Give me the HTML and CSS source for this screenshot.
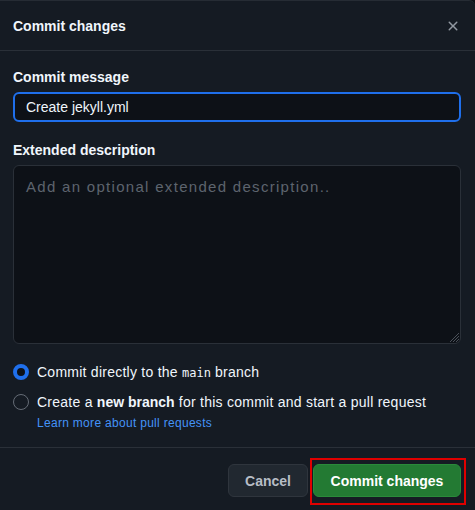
FILE: index.html
```html
<!DOCTYPE html>
<html>
<head>
<meta charset="utf-8">
<link rel="stylesheet" href="styles.css">
</head>
<body>
<div class="dialog">
  <div class="header">
    <h1 class="title">Commit changes</h1>
    <button class="close" aria-label="Close">
      <svg width="16" height="16" viewBox="0 0 16 16"><path fill="currentColor" d="M3.72 3.72a.75.75 0 0 1 1.06 0L8 6.94l3.22-3.220a.749.749 0 0 1 1.275.326.749.749 0 0 1-.215.734L9.06 8l3.22 3.22a.749.749 0 0 1-.326 1.275.749.749 0 0 1-.734-.215L8 9.06l-3.22 3.22a.751.751 0 0 1-1.042-.018.751.751 0 0 1-.018-1.042L6.94 8 3.72 4.78a.75.75 0 0 1 0-1.06Z"/></svg>
    </button>
  </div>
  <div class="body">
    <label class="label">Commit message</label>
    <input class="input" type="text" value="Create jekyll.yml">
    <label class="label label-ext">Extended description</label>
    <div class="textarea-wrap">
      <textarea class="textarea" placeholder="Add an optional extended description.."></textarea>
      <svg class="grip" width="10" height="10" viewBox="0 0 10 10"><path d="M10 1 1 10M10 4 4 10M10 7 7 10" stroke="#4a5059" stroke-width="1"/></svg>
    </div>
    <div class="options">
      <div class="option">
        <span class="radio checked"></span>
        <span class="option-text">Commit directly to the <code class="mono">main</code> branch</span>
      </div>
      <div class="option">
        <span class="radio"></span>
        <div class="option-col">
          <span class="option-text">Create a <strong>new branch</strong> for this commit and start a pull request</span>
          <a class="link" href="#">Learn more about pull requests</a>
        </div>
      </div>
    </div>
  </div>
  <div class="footer">
    <button class="btn btn-default">Cancel</button>
    <div class="highlight-wrap">
      <button class="btn btn-primary">Commit changes</button>
      <span class="annotation"></span>
    </div>
  </div>
</div>
</body>
</html>
```
FILE: styles.css
```css
* { box-sizing: border-box; }
html, body { margin: 0; padding: 0; }
body {
  background: #0d1117;
  font-family: "Liberation Sans", Arial, sans-serif;
  font-size: 14px;
  color: #f0f6fc;
}
.dialog {
  width: 475px;
  height: 510px;
  background: #151b23;
  display: flex;
  flex-direction: column;
  border-top: 1px solid #262c34;
  border-top-right-radius: 6px;
}
.header {
  display: flex;
  align-items: center;
  justify-content: space-between;
  padding: 15px 14px 14px 13px;
  border-bottom: 1px solid #2a3038;
}
.title {
  margin: 0;
  font-size: 14px;
  line-height: 20px;
  font-weight: 700;
  color: #f0f6fc;
}
.close {
  background: none;
  border: 0;
  padding: 0;
  width: 16px;
  height: 16px;
  color: #9198a1;
  display: flex;
}
.body {
  padding: 16px 14px 0 13px;
  display: flex;
  flex-direction: column;
  flex: 1;
}
.label {
  font-weight: 700;
  line-height: 20px;
  margin-bottom: 5px;
  color: #f0f6fc;
}
.label-ext { margin-top: 18px; }
.input {
  height: 30px;
  width: 100%;
  background: #0d1117;
  border: 2px solid #1f6feb;
  border-radius: 6px;
  padding: 0 11px;
  font-family: "Liberation Sans", Arial, sans-serif;
  font-size: 14px;
  color: #f0f6fc;
  outline: none;
}
.textarea-wrap { position: relative; display: flex; }
.textarea {
  height: 179px;
  width: 100%;
  background: #0d1117;
  border: 1px solid #2a3038;
  border-radius: 6px;
  padding: 11px 12px;
  font-family: "Liberation Sans", Arial, sans-serif;
  font-size: 14px;
  line-height: 20px;
  color: #f0f6fc;
  resize: none;
  outline: none;
}
.textarea::placeholder { color: #5d646e; font-size: 15px; letter-spacing: 1.3px; }
.grip {
  position: absolute;
  right: 2px;
  bottom: 2px;
}
.options {
  display: flex;
  flex-direction: column;
  gap: 9px;
  margin-top: 18px;
}
.option {
  display: flex;
  align-items: flex-start;
  gap: 8px;
}
.option-col { display: flex; flex-direction: column; gap: 3px; }
.option-text { line-height: 20px; color: #f0f6fc; letter-spacing: 0.25px; }
.option-text strong { font-weight: 700; letter-spacing: 0; }
.mono {
  font-family: "DejaVu Sans Mono", "Liberation Mono", monospace;
  font-size: 12px;
  letter-spacing: 0;
}
.radio {
  width: 16px;
  height: 16px;
  border-radius: 50%;
  border: 1px solid #656c76;
  margin-top: 2px;
  flex: none;
}
.radio.checked {
  border: 4px solid #1f6feb;
  background: #0d1117;
}
.link {
  color: #4493f8;
  font-size: 12px;
  line-height: 16px;
  letter-spacing: 0.3px;
  text-decoration: none;
}
.footer {
  display: flex;
  justify-content: flex-end;
  gap: 5px;
  padding: 16px 14px 13px 13px;
  border-top: 1px solid #2a3038;
}
.btn {
  height: 33px;
  border-radius: 6px;
  font-family: "Liberation Sans", Arial, sans-serif;
  font-size: 14px;
  font-weight: 700;
  padding: 0 16px;
  cursor: pointer;
}
.btn-default {
  width: 80px;
  background: #212830;
  border: 1px solid #2f353d;
  color: #b7bdc6;
}
.btn-primary {
  width: 148px;
  background: #237a33;
  border: 1px solid #2a8a3a;
  color: #ffffff;
}
.highlight-wrap { position: relative; display: flex; }
.annotation {
  position: absolute;
  left: -3px;
  top: -6px;
  right: -5px;
  bottom: -8px;
  border: 2px solid #e00000;
  pointer-events: none;
}
```
